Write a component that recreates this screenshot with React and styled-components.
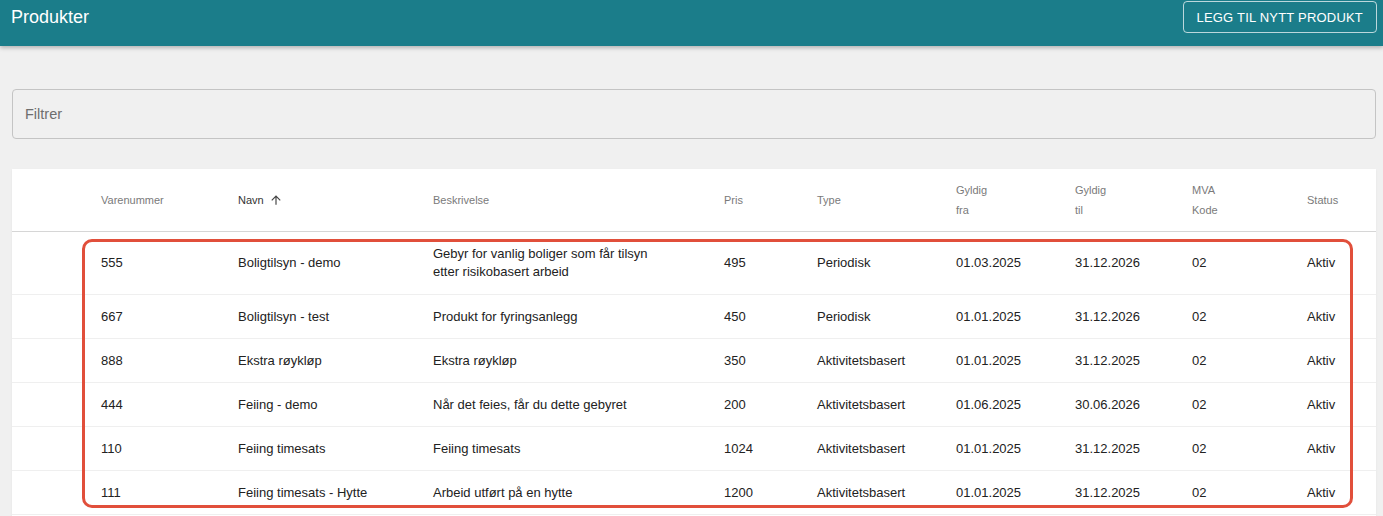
import React from 'react';
import styled, { createGlobalStyle } from 'styled-components';

const GlobalStyle = createGlobalStyle`
  body {
    margin: 0;
    background: #f0f0f0;
    font-family: "Liberation Sans", Arial, sans-serif;
  }
`;

// tom, varenr, navn, beskrivelse, pris, type, fra, til, mva, status
const COLS = '73px 137px 195px 291px 93px 139px 119px 117px 115px 1fr';

const AppBar = styled.header`
  height: 46px;
  box-sizing: border-box;
  background: #1b7d8a;
  display: flex;
  align-items: flex-start;
  justify-content: space-between;
  padding: 1px 6px 0 11px;
  box-shadow: 0 2px 4px rgba(0, 0, 0, 0.25);
`;

const Title = styled.h1`
  margin: 0;
  font-size: 18px;
  font-weight: 400;
  color: #fff;
  line-height: 32px;
`;

const AddButton = styled.button`
  height: 32px;
  padding: 0 13px;
  background: transparent;
  border: 1px solid rgba(255, 255, 255, 0.7);
  border-radius: 4px;
  color: #fff;
  font-family: inherit;
  font-size: 13px;
  font-weight: 500;
  letter-spacing: 0.2px;
  text-transform: uppercase;
  cursor: pointer;
`;

const Main = styled.main`
  padding: 43px 7px 0 12px;
`;

const FilterBox = styled.div`
  height: 50px;
  box-sizing: border-box;
  border: 1px solid #c4c4c4;
  border-radius: 4px;
  display: flex;
  align-items: center;
  padding: 0 12px;
  margin-bottom: 30px;
`;

const FilterInput = styled.input`
  border: none;
  outline: none;
  background: transparent;
  width: 100%;
  padding: 0;
  font-family: inherit;
  font-size: 14.5px;
  color: #222;
  &::placeholder {
    color: #6e6e6e;
  }
`;

const Card = styled.section`
  position: relative;
  background: #fff;
  box-shadow: 0 1px 2px rgba(0, 0, 0, 0.06);
  min-height: 360px;
`;

const HeadRow = styled.div`
  display: grid;
  grid-template-columns: ${COLS};
  align-items: center;
  height: 63px;
  box-sizing: border-box;
  border-bottom: 1px solid #d6d6d6;
`;

const HeadCell = styled.div`
  padding: 0 16px;
  font-size: 11px;
  line-height: 20px;
  color: ${(p) => (p.$active ? '#333' : '#7a7a7a')};
  display: flex;
  align-items: center;
  gap: 5px;
`;

const Row = styled.div`
  display: grid;
  grid-template-columns: ${COLS};
  align-items: center;
  padding: 13px 0 ${(p) => (p.$tall ? '13px' : '12px')};
  border-bottom: 1px solid #efefef;
`;

const Cell = styled.div`
  padding: 0 16px;
  font-size: 13px;
  line-height: 18px;
  color: #222;
`;

const Desc = styled.div`
  max-width: 232px;
`;

const Highlight = styled.div`
  position: absolute;
  left: 70px;
  top: 70px;
  width: 1271px;
  height: 269px;
  box-sizing: border-box;
  border: 3px solid #e14f3b;
  border-radius: 10px;
  pointer-events: none;
`;

const SortArrow = () => (
  <svg width="14" height="14" viewBox="0 0 24 24" fill="#444">
    <path d="M4 12l1.41 1.41L11 7.83V20h2V7.83l5.58 5.59L20 12l-8-8-8 8z" />
  </svg>
);

const products = [
  ['555', 'Boligtilsyn - demo', 'Gebyr for vanlig boliger som får tilsyn etter risikobasert arbeid', '495', 'Periodisk', '01.03.2025', '31.12.2026'],
  ['667', 'Boligtilsyn - test', 'Produkt for fyringsanlegg', '450', 'Periodisk', '01.01.2025', '31.12.2026'],
  ['888', 'Ekstra røykløp', 'Ekstra røykløp', '350', 'Aktivitetsbasert', '01.01.2025', '31.12.2025'],
  ['444', 'Feiing - demo', 'Når det feies, får du dette gebyret', '200', 'Aktivitetsbasert', '01.06.2025', '30.06.2026'],
  ['110', 'Feiing timesats', 'Feiing timesats', '1024', 'Aktivitetsbasert', '01.01.2025', '31.12.2025'],
  ['111', 'Feiing timesats - Hytte', 'Arbeid utført på en hytte', '1200', 'Aktivitetsbasert', '01.01.2025', '31.12.2025'],
];

export default function App() {
  return (
    <>
      <GlobalStyle />
      <AppBar>
        <Title>Produkter</Title>
        <AddButton>Legg til nytt produkt</AddButton>
      </AppBar>
      <Main>
        <FilterBox>
          <FilterInput placeholder="Filtrer" />
        </FilterBox>
        <Card>
          <HeadRow>
            <HeadCell />
            <HeadCell>Varenummer</HeadCell>
            <HeadCell $active>
              Navn <SortArrow />
            </HeadCell>
            <HeadCell>Beskrivelse</HeadCell>
            <HeadCell>Pris</HeadCell>
            <HeadCell>Type</HeadCell>
            <HeadCell>Gyldig<br />fra</HeadCell>
            <HeadCell>Gyldig<br />til</HeadCell>
            <HeadCell>MVA<br />Kode</HeadCell>
            <HeadCell>Status</HeadCell>
          </HeadRow>
          {products.map(([nr, navn, desc, pris, type, fra, til], i) => (
            <Row key={nr} $tall={i === 0}>
              <Cell />
              <Cell>{nr}</Cell>
              <Cell>{navn}</Cell>
              <Cell><Desc>{desc}</Desc></Cell>
              <Cell>{pris}</Cell>
              <Cell>{type}</Cell>
              <Cell>{fra}</Cell>
              <Cell>{til}</Cell>
              <Cell>02</Cell>
              <Cell>Aktiv</Cell>
            </Row>
          ))}
          <Highlight />
        </Card>
      </Main>
    </>
  );
}
